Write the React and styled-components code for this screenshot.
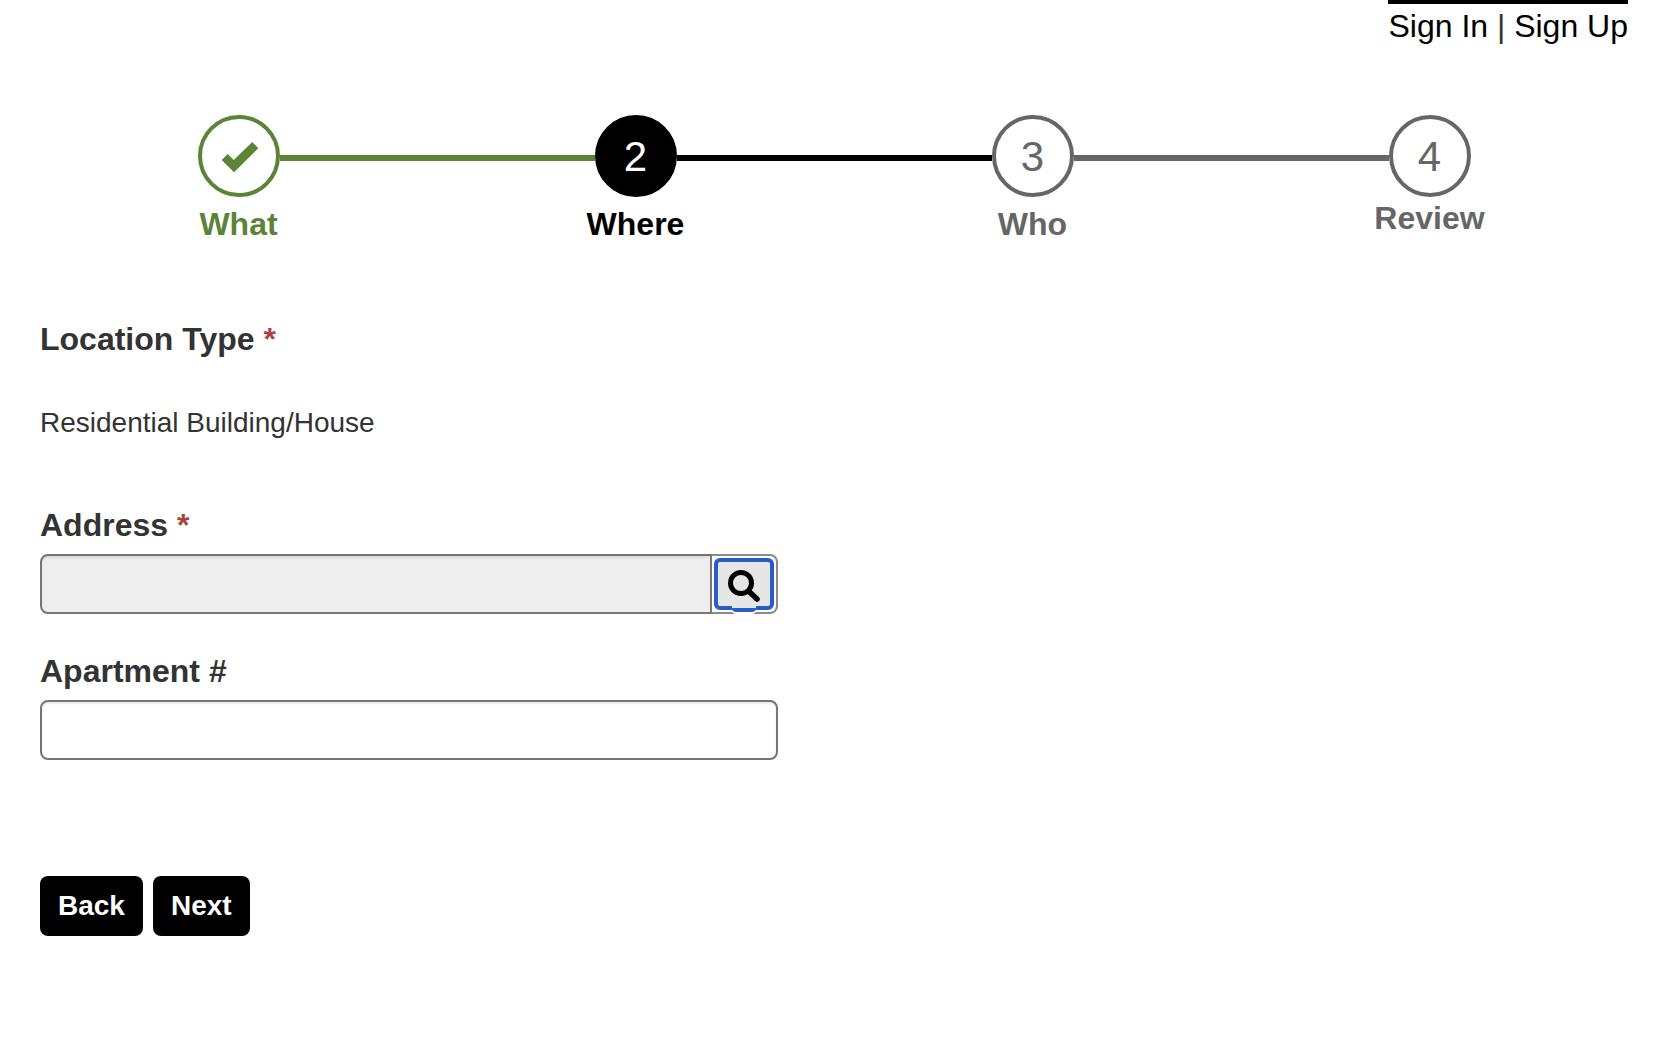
import React from "react";
import styled, { createGlobalStyle } from "styled-components";

const GREEN = "#5b8437";
const BLACK = "#000";
const GREY = "#666";
const FOCUS = "#265dca";

const GlobalStyle = createGlobalStyle`
  *, *::before, *::after { box-sizing: border-box; }
  body {
    margin: 0;
    background: #fff;
    color: #333;
    font-family: "Liberation Sans", Arial, Helvetica, sans-serif;
    font-size: 28px;
    line-height: 40px;
  }
`;

const Page = styled.div`
  padding: 0 28px 40px 40px;
`;

const Header = styled.header`
  display: flex;
  justify-content: flex-end;
`;

const AccountNav = styled.nav`
  border-top: 4px solid ${BLACK};
  font-size: 32px;
  line-height: 44px;
`;

const AccountLink = styled.a`
  color: ${BLACK};
  text-decoration: none;
`;

const StepList = styled.ol`
  display: grid;
  grid-template-columns: repeat(4, 1fr);
  list-style: none;
  margin: 0;
  padding: 67px 0 0;
`;

const Step = styled.li`
  color: ${(p) => p.$color};
  text-align: center;
`;

const StepTrack = styled.div`
  display: flex;
  align-items: flex-start;
`;

const Connector = styled.span`
  flex: 1;
  height: 6px;
  margin-top: 40px;
  background: ${(p) => p.$color || "transparent"};
`;

const StepCircle = styled.span`
  display: flex;
  align-items: center;
  justify-content: center;
  width: 82px;
  height: 82px;
  padding-top: 2px;
  border: 4px solid currentColor;
  border-radius: 50%;
  background: ${(p) => (p.$filled ? BLACK : "transparent")};
`;

const StepNumber = styled.span`
  color: ${(p) => (p.$filled ? "#fff" : "inherit")};
  font-size: 42px;
  line-height: 44px;
`;

const StepLabel = styled.div`
  margin-top: ${(p) => (p.$last ? "0" : "6px")};
  font-size: 32px;
  font-weight: bold;
  line-height: 42px;
`;

const Form = styled.form`
  width: calc(50% - 56px);
  padding-top: 74px;
`;

const Field = styled.div`
  margin-bottom: ${(p) => p.$gap};
`;

const Label = styled.label`
  display: block;
  margin-bottom: 9px;
  font-size: 32px;
  font-weight: bold;
  line-height: 40px;
`;

const Required = styled.span`
  color: #a94442;
`;

const Output = styled.output`
  display: block;
  padding-top: 35px;
`;

const TextInput = styled.input`
  display: block;
  flex: 1;
  width: 100%;
  min-width: 0;
  height: 60px;
  padding: 0 16px;
  border: 2px solid #757575;
  border-radius: ${(p) => (p.$joined ? "8px 0 0 8px" : "8px")};
  background: ${(p) => (p.readOnly ? "#eee" : "#fff")};
  box-shadow: inset 0 2px 2px rgba(0, 0, 0, 0.075);
  color: inherit;
  font: inherit;
`;

const InputGroup = styled.div`
  display: flex;
`;

const SearchAddon = styled.span`
  display: flex;
  width: 66px;
  height: 60px;
  padding: 2px;
  border: 2px solid #8a8a8a;
  border-left: 0;
  border-radius: 0 8px 8px 0;
`;

const SearchButton = styled.button`
  position: relative;
  display: flex;
  align-items: center;
  justify-content: center;
  flex: 1;
  padding: 0;
  border: 4px solid ${FOCUS};
  border-radius: 6px;
  background: #e6e6e6;
  color: ${BLACK};
  cursor: pointer;

  &::after {
    content: "";
    position: absolute;
    bottom: -6px;
    left: 50%;
    width: 24px;
    height: 6px;
    margin-left: -12px;
    border-bottom: 4px solid ${FOCUS};
    border-radius: 0 0 4px 4px;
    background: #e6e6e6;
    box-shadow: 0 2px 0 #fff;
  }
`;

const Actions = styled.div`
  display: flex;
  gap: 10px;
`;

const ActionButton = styled.button`
  height: 60px;
  padding: 0 18px;
  border: 0;
  border-radius: 8px;
  background: ${BLACK};
  color: #fff;
  font: inherit;
  font-weight: bold;
  cursor: pointer;
`;

const steps = [
  { label: "What", color: GREEN, after: GREEN, done: true },
  { label: "Where", color: BLACK, before: GREEN, after: BLACK, current: true },
  { label: "Who", color: GREY, before: BLACK, after: GREY },
  { label: "Review", color: GREY, before: GREY },
];

function CheckIcon() {
  return (
    <svg width="40" height="32" viewBox="0 0 40 32" aria-hidden="true">
      <path d="M2.7 19 8.7 13l6 6 18.6-18 6 6.3L15 31.3z" fill="currentColor" />
    </svg>
  );
}

function SearchIcon() {
  return (
    <svg width="36" height="38" viewBox="0 0 36 38" fill="none" stroke="currentColor" aria-hidden="true">
      <circle cx="15" cy="18" r="10.5" strokeWidth="5" />
      <path d="m23 26.5 8 7.5" strokeWidth="5.5" strokeLinecap="round" />
    </svg>
  );
}

export default function App() {
  return (
    <>
      <GlobalStyle />
      <Page>
        <Header>
          <AccountNav aria-label="Account">
            <AccountLink href="#signin">Sign In</AccountLink> |{" "}
            <AccountLink href="#signup">Sign Up</AccountLink>
          </AccountNav>
        </Header>
        <main>
          <StepList>
            {steps.map((s, i) => (
              <Step key={s.label} $color={s.color} aria-current={s.current ? "step" : undefined}>
                <StepTrack>
                  <Connector $color={s.before} />
                  <StepCircle $filled={s.current}>
                    {s.done ? <CheckIcon /> : <StepNumber $filled={s.current}>{i + 1}</StepNumber>}
                  </StepCircle>
                  <Connector $color={s.after} />
                </StepTrack>
                <StepLabel $last={i === steps.length - 1}>{s.label}</StepLabel>
              </Step>
            ))}
          </StepList>
          <Form onSubmit={(e) => e.preventDefault()}>
            <Field $gap="62px">
              <Label htmlFor="location-type">
                Location Type <Required>*</Required>
              </Label>
              <Output id="location-type">Residential Building/House</Output>
            </Field>
            <Field $gap="37px">
              <Label htmlFor="address">
                Address <Required>*</Required>
              </Label>
              <InputGroup>
                <TextInput id="address" type="text" readOnly $joined />
                <SearchAddon>
                  <SearchButton type="button" aria-label="Search address">
                    <SearchIcon />
                  </SearchButton>
                </SearchAddon>
              </InputGroup>
            </Field>
            <Field $gap="116px">
              <Label htmlFor="apartment">Apartment #</Label>
              <TextInput id="apartment" type="text" />
            </Field>
            <Actions>
              <ActionButton type="button">Back</ActionButton>
              <ActionButton type="submit">Next</ActionButton>
            </Actions>
          </Form>
        </main>
      </Page>
    </>
  );
}
